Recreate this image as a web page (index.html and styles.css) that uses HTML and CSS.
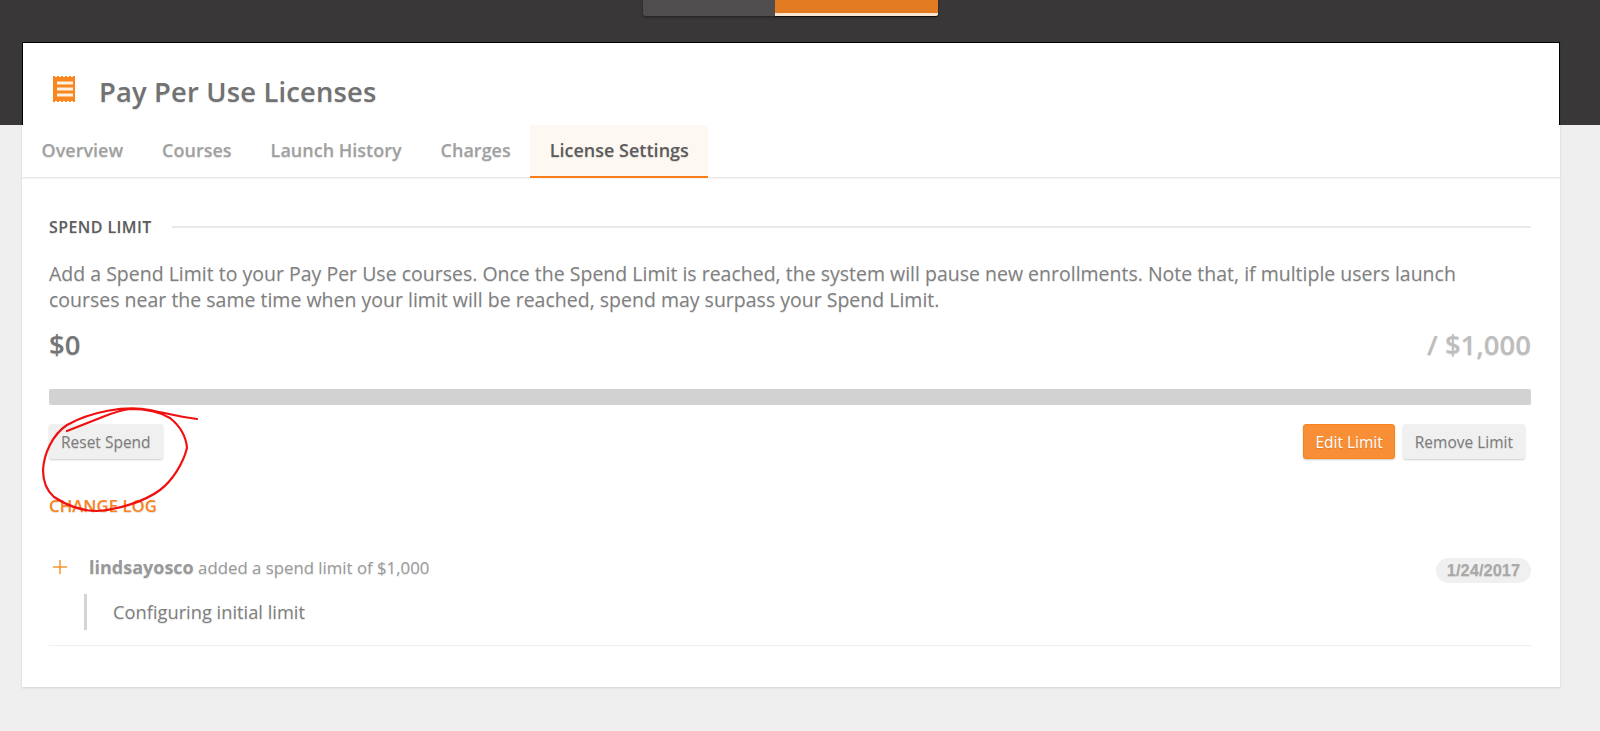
FILE: index.html
```html
<!DOCTYPE html>
<html lang="en">
<head>
<meta charset="utf-8">
<title>Pay Per Use Licenses</title>
<link rel="stylesheet" href="styles.css">
</head>
<body>
<header class="hero">
  <div class="switch">
    <div class="switch-off"></div>
    <div class="switch-on"></div>
  </div>
</header>
<main class="card">
  <div class="card-top">
    <svg class="title-icon" width="26" height="28" viewBox="0 0 26 28" aria-hidden="true">
      <path fill="#f9861f" d="M1 1h2v1h2V1h2v1h2V1h2v1h2V1h2v1h2V1h2v1h2V1h2v26h-2v-1h-2v1h-2v-1h-2v1h-2v-1h-2v1H9v-1H7v1H5v-1H3v1H1z"/>
      <path fill="#fdf1e4" d="M5 6.500h16v3H5zM5 12.500h16v3H5zM5 18.500h16v3H5z"/>
    </svg>
    <h1 class="title">Pay Per Use Licenses</h1>
  </div>
  <nav class="tabs">
    <a class="tab">Overview</a>
    <a class="tab">Courses</a>
    <a class="tab">Launch History</a>
    <a class="tab">Charges</a>
    <a class="tab tab-active">License Settings</a>
  </nav>
  <section class="content">
    <div class="section-head">
      <h2 class="section-title">SPEND LIMIT</h2>
      <div class="section-rule"></div>
    </div>
    <p class="intro">Add a Spend Limit to your Pay Per Use courses. Once the Spend Limit is reached, the system will pause new enrollments. Note that, if multiple users launch courses near the same time when your limit will be reached, spend may surpass your Spend Limit.</p>
    <div class="amounts">
      <span class="spent">$0</span>
      <span class="limit">/ $1,000</span>
    </div>
    <div class="bar"></div>
    <div class="actions">
      <button class="btn">Reset Spend</button>
      <div class="actions-right">
        <button class="btn btn-primary">Edit Limit</button>
        <button class="btn">Remove Limit</button>
      </div>
    </div>
    <h2 class="log-title">CHANGE LOG</h2>
    <div class="log-entry">
      <div class="log-row">
        <svg class="plus" width="14" height="14" viewBox="0 0 14 14" aria-hidden="true">
          <path stroke="#f9962f" stroke-width="1.500" fill="none" d="M0 7h14M7 0v14"/>
        </svg>
        <span class="log-text"><b class="log-user">lindsayosco</b> added a spend limit of $1,000</span>
        <span class="date">1/24/2017</span>
      </div>
      <blockquote class="note">Configuring initial limit</blockquote>
    </div>
  </section>
</main>
<svg class="scribble" width="220" height="130" viewBox="0 0 220 130" aria-hidden="true">
  <path fill="none" stroke="#f01010" stroke-width="2.200" stroke-linecap="round" stroke-linejoin="round" d="M197 19C180 17 165 13 150 10C125 5 90 12 67 25C52 35 44 54 43 70C43 82 46 90 54 97C66 105 82 111 97 111C116 110 144 102 160 90C172 81 183 64 187 48C186 36 180 26 170 18C160 12 146 9 130 9C116 11 108 15 100 18L67 31"/>
</svg>
</body>
</html>
```
FILE: styles.css
```css
* { box-sizing: border-box; }
html, body { margin: 0; padding: 0; }
body {
  position: relative;
  height: 731px;
  overflow: hidden;
  background: #efefef;
  font-family: "Open Sans", "Noto Sans", sans-serif;
  color: #777;
  text-shadow: 0 1px 1px rgba(0, 0, 0, .12);
}
.hero { height: 125px; background: #393738; display: flex; justify-content: center; padding-right: 19px; }
.switch { display: flex; height: 16px; width: 295px; box-shadow: 0 1px 3px rgba(0, 0, 0, .45); border-radius: 0 0 3px 3px; }
.switch-off { width: 132px; background: #4f4d4e; border-radius: 0 0 0 3px; }
.switch-on { width: 163px; background: #e27b22; border-bottom: 3px solid #fbe6d2; box-shadow: 0 1px 0 #111; border-radius: 0 0 2px 0; }
.card {
  width: 1538px;
  height: 645px;
  margin: -83px 0 0 22px;
  background: #fff;
  box-shadow: 0 1px 2px rgba(0, 0, 0, .12);
}
.card-top {
  height: 83px;
  border: 1px solid #000;
  border-bottom: 0;
  padding: 32px 0 0 29px;
  display: flex;
  align-items: flex-start;
}
.title-icon { flex: none; }
.title { margin: -1px 0 0 21px; font-size: 27.300px; line-height: 36px; font-weight: 600; color: #727272; letter-spacing: .2px; }
.tabs { display: flex; height: 53px; border-bottom: 1px solid #eceaea; box-shadow: 0 1px 1px rgba(0, 0, 0, .04); }
.tab { padding: 0 19.500px; font-size: 18px; font-weight: 600; line-height: 50px; color: #a0a0a0; height: 53px; border-bottom: 2px solid transparent; }
.tab-active { background: #fdf8f2; color: #5c5c5c; border-bottom-color: #f9801a; }
.content { padding: 0 29px 0 27px; }
.section-head { display: flex; align-items: center; gap: 20px; height: 20px; margin-top: 39px; }
.section-title { margin: 0; font-size: 16px; line-height: 20px; font-weight: 600; color: #5c5c5c; letter-spacing: .4px; white-space: nowrap; }
.section-rule { flex: 1; height: 2px; background: #e9e9e9; }
.intro { margin: 24px 0 0; max-width: 1440px; font-size: 19.500px; line-height: 25.500px; color: #808080; }
.amounts { display: flex; justify-content: space-between; align-items: center; height: 36px; margin-top: 14px; font-size: 27.500px; font-weight: 600; }
.spent { color: #757575; }
.limit { color: #bdbdbd; }
.bar { height: 16px; margin-top: 27px; background: #d2d2d2; border-radius: 2px; }
.actions { display: flex; justify-content: space-between; margin-top: 19px; padding-right: 6px; }
.actions-right { display: flex; gap: 8px; }
.btn {
  height: 35px;
  padding: 0 12px;
  border: 0;
  border-radius: 3px;
  background: #f0f0f0;
  box-shadow: 0 1px 2px rgba(0, 0, 0, .2);
  font-family: inherit;
  font-size: 15.500px;
  color: #7c7c7c;
  text-shadow: inherit;
}
.btn-primary { background: #f88e35; border: 1px solid #f9821a; color: #fff; padding: 0 11px; }
.log-title { margin: 37px 0 0; font-size: 16.800px; line-height: 20px; font-weight: 600; color: #f9841f; }
.log-entry { margin-top: 38px; height: 92px; border-bottom: 1px solid #efefef; }
.log-row { display: flex; align-items: center; height: 25px; }
.plus { flex: none; margin: 0 0 0 4px; }
.log-text { flex: 1; margin-left: 22px; font-size: 16.800px; color: #9a9a9a; }
.log-user { font-size: 18px; font-weight: 700; color: #999; }
.date { width: 95px; height: 25px; margin-top: 8px; border-radius: 13px; background: #f0f0f0; text-align: center; font-family: "Liberation Sans", sans-serif; font-size: 16.500px; font-weight: 700; line-height: 25px; color: #a9a9a9; }
.note { margin: 15px 0 0 35px; height: 36px; border-left: 3px solid #d4d4d4; padding-left: 26px; font-size: 18.300px; line-height: 35px; color: #808080; }
.scribble { position: absolute; left: 0; top: 400px; }
```
